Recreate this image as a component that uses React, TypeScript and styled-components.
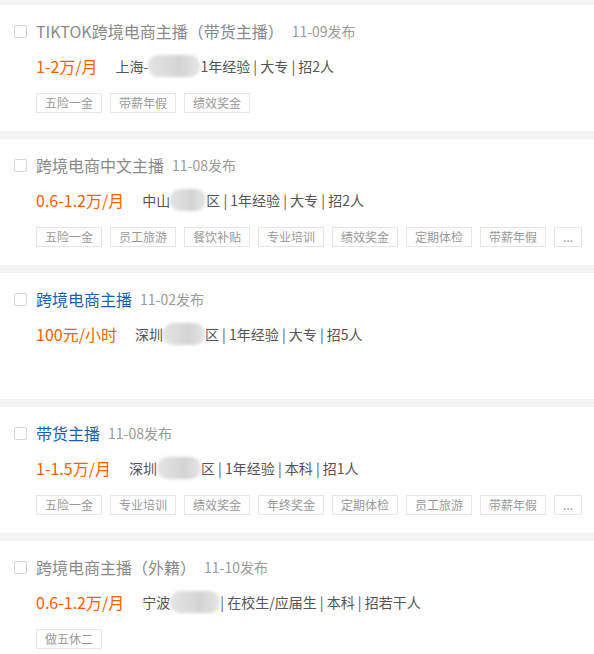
import styled, { createGlobalStyle } from "styled-components";

interface Job {
  title: string;
  date: string;
  visited: boolean;
  salary: string;
  city: string;
  blur: number;
  rest: string;
  tags: string[];
  more?: boolean;
}

const jobs: Job[] = [
  {
    title: "TIKTOK跨境电商主播（带货主播）",
    date: "11-09发布",
    visited: true,
    salary: "1-2万/月",
    city: "上海-",
    blur: 52,
    rest: "1年经验 | 大专 | 招2人",
    tags: ["五险一金", "带薪年假", "绩效奖金"],
  },
  {
    title: "跨境电商中文主播",
    date: "11-08发布",
    visited: true,
    salary: "0.6-1.2万/月",
    city: "中山",
    blur: 36,
    rest: "区 | 1年经验 | 大专 | 招2人",
    tags: ["五险一金", "员工旅游", "餐饮补贴", "专业培训", "绩效奖金", "定期体检", "带薪年假"],
    more: true,
  },
  {
    title: "跨境电商主播",
    date: "11-02发布",
    visited: false,
    salary: "100元/小时",
    city: "深圳",
    blur: 42,
    rest: "区 | 1年经验 | 大专 | 招5人",
    tags: [],
  },
  {
    title: "带货主播",
    date: "11-08发布",
    visited: false,
    salary: "1-1.5万/月",
    city: "深圳",
    blur: 44,
    rest: "区 | 1年经验 | 本科 | 招1人",
    tags: ["五险一金", "专业培训", "绩效奖金", "年终奖金", "定期体检", "员工旅游", "带薪年假"],
    more: true,
  },
  {
    title: "跨境电商主播（外籍）",
    date: "11-10发布",
    visited: true,
    salary: "0.6-1.2万/月",
    city: "宁波",
    blur: 50,
    rest: "| 在校生/应届生 | 本科 | 招若干人",
    tags: ["做五休二"],
  },
];

const JobList = () => {
  return (
    <List>
      <GlobalStyle />
      {jobs.map((job) => (
        <Card key={job.title}>
          <Header>
            <Check />
            <Title visited={job.visited}>{job.title}</Title>
            <Date>{job.date}</Date>
          </Header>
          <InfoRow>
            <Salary>{job.salary}</Salary>
            <Info>
              {job.city}
              <Blur style={{ width: job.blur }} />
              {job.rest}
            </Info>
          </InfoRow>
          {job.tags.length > 0 && (
            <Tags>
              {job.tags.map((t) => (
                <Tag key={t}>{t}</Tag>
              ))}
              {job.more && <Tag>...</Tag>}
            </Tags>
          )}
        </Card>
      ))}
    </List>
  );
};

const GlobalStyle = createGlobalStyle`
  body {
    margin: 0;
    background: #f3f3f3;
    font-family: "Noto Sans CJK SC", "Noto Sans", sans-serif;
  }
`;

const List = styled.div`
  display: flex;
  flex-direction: column;
  gap: 8px;
  padding-top: 5px;
`;

const Card = styled.div`
  background: #ffffff;
  height: 126px;
  box-sizing: border-box;
  padding: 14px 0 0 14px;
`;

const Header = styled.div`
  display: flex;
  align-items: center;
  height: 24px;
`;

const Check = styled.span`
  width: 13px;
  height: 13px;
  box-sizing: border-box;
  border: 1px solid #d6d6d6;
  border-radius: 2px;
  margin-right: 9px;
`;

const Title = styled.span<{ visited?: boolean }>`
  font-size: 16px;
  color: ${(props) => (props.visited ? "#8a8a8a" : "#1b5fb0")};
`;

const Date = styled.span`
  font-size: 14px;
  color: #9a9a9a;
  margin-left: 8px;
`;

const InfoRow = styled.div`
  display: flex;
  align-items: center;
  height: 24px;
  margin-top: 11px;
  padding-left: 22px;
`;

const Salary = styled.span`
  font-size: 16px;
  color: #ff6200;
  margin-right: 18px;
`;

const Info = styled.span`
  display: flex;
  align-items: center;
  font-size: 14px;
  color: #555555;
  white-space: pre;
`;

const Blur = styled.span`
  display: inline-block;
  height: 22px;
  border-radius: 10px;
  background: linear-gradient(90deg, #e4e4e4 0%, #dadada 40%, #d3d3d3 60%, #e6e6e6 100%);
  filter: blur(1.5px);
`;

const Tags = styled.div`
  display: flex;
  gap: 8px;
  margin-top: 15px;
  padding-left: 22px;
`;

const Tag = styled.span`
  height: 20px;
  box-sizing: border-box;
  border: 1px solid #e6e6e6;
  padding: 0 8px;
  font-size: 12px;
  line-height: 18px;
  color: #999999;
`;

export default JobList;
